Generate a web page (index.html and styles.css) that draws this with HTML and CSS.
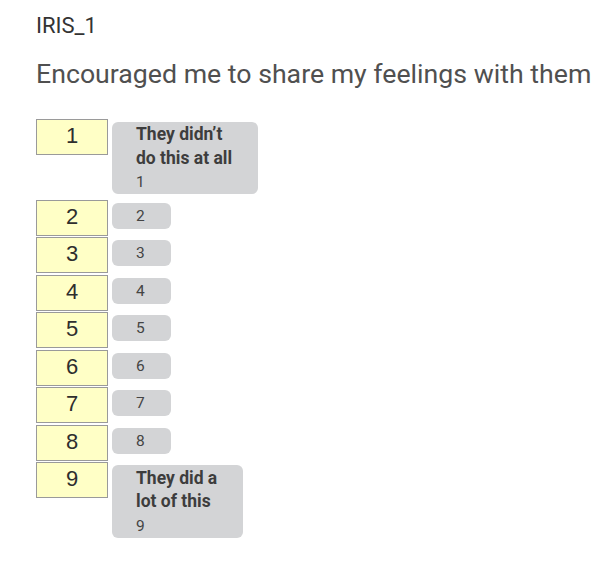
FILE: index.html
```html
<!DOCTYPE html>
<html>
<head>
<meta charset="utf-8">
<link rel="stylesheet" href="styles.css">
</head>
<body>
<div class="question">
  <div class="qid">IRIS_1</div>
  <div class="qtext">Encouraged me to share my feelings with them</div>
  <div class="scale">
    <div class="row"><div class="box">1</div><div class="label"><div class="anchor">They didn’t<br>do this at all</div><div class="num">1</div></div></div>
    <div class="row"><div class="box">2</div><div class="label small"><div class="num">2</div></div></div>
    <div class="row"><div class="box">3</div><div class="label small"><div class="num">3</div></div></div>
    <div class="row"><div class="box">4</div><div class="label small"><div class="num">4</div></div></div>
    <div class="row"><div class="box">5</div><div class="label small"><div class="num">5</div></div></div>
    <div class="row"><div class="box">6</div><div class="label small"><div class="num">6</div></div></div>
    <div class="row"><div class="box">7</div><div class="label small"><div class="num">7</div></div></div>
    <div class="row"><div class="box">8</div><div class="label small"><div class="num">8</div></div></div>
    <div class="row"><div class="box">9</div><div class="label"><div class="anchor">They did a<br>lot of this</div><div class="num">9</div></div></div>
  </div>
</div>
</body>
</html>
```
FILE: styles.css
```css
html, body {
  margin: 0;
  padding: 0;
  background: #ffffff;
}
.question {
  padding: 12.5px 0 0 36px;
  font-family: Roboto, "Liberation Sans", sans-serif;
}
.qid {
  font-size: 22px;
  line-height: 26px;
  color: #333333;
}
.qtext {
  margin-top: 19.7px;
  font-size: 26.7px;
  line-height: 32px;
  color: #505050;
  white-space: nowrap;
}
.scale {
  margin-top: 28.8px;
  display: flex;
  flex-direction: column;
}
.row {
  display: flex;
  align-items: flex-start;
  margin-bottom: 1.5px;
}
.box {
  box-sizing: border-box;
  width: 72px;
  height: 36px;
  border: 1px solid #9a9a9a;
  background: #ffffc6;
  font-family: "Liberation Sans", Arial, sans-serif;
  font-size: 22px;
  line-height: 32px;
  text-align: center;
  color: #2e2e2e;
}
.label {
  margin: 3px 0 4px 4px;
  padding: 1.5px 26px 0 24px;
  background: #d3d4d6;
  border-radius: 6px;
  color: #404040;
}
.anchor {
  font-size: 17.5px;
  font-weight: 700;
  line-height: 23.5px;
  color: #3d3d3d;
  white-space: nowrap;
}
.num {
  font-size: 15.5px;
  line-height: 24px;
  color: #444444;
}
.small {
  padding-top: 0;
}
.small .num {
  line-height: 26px;
}
```
